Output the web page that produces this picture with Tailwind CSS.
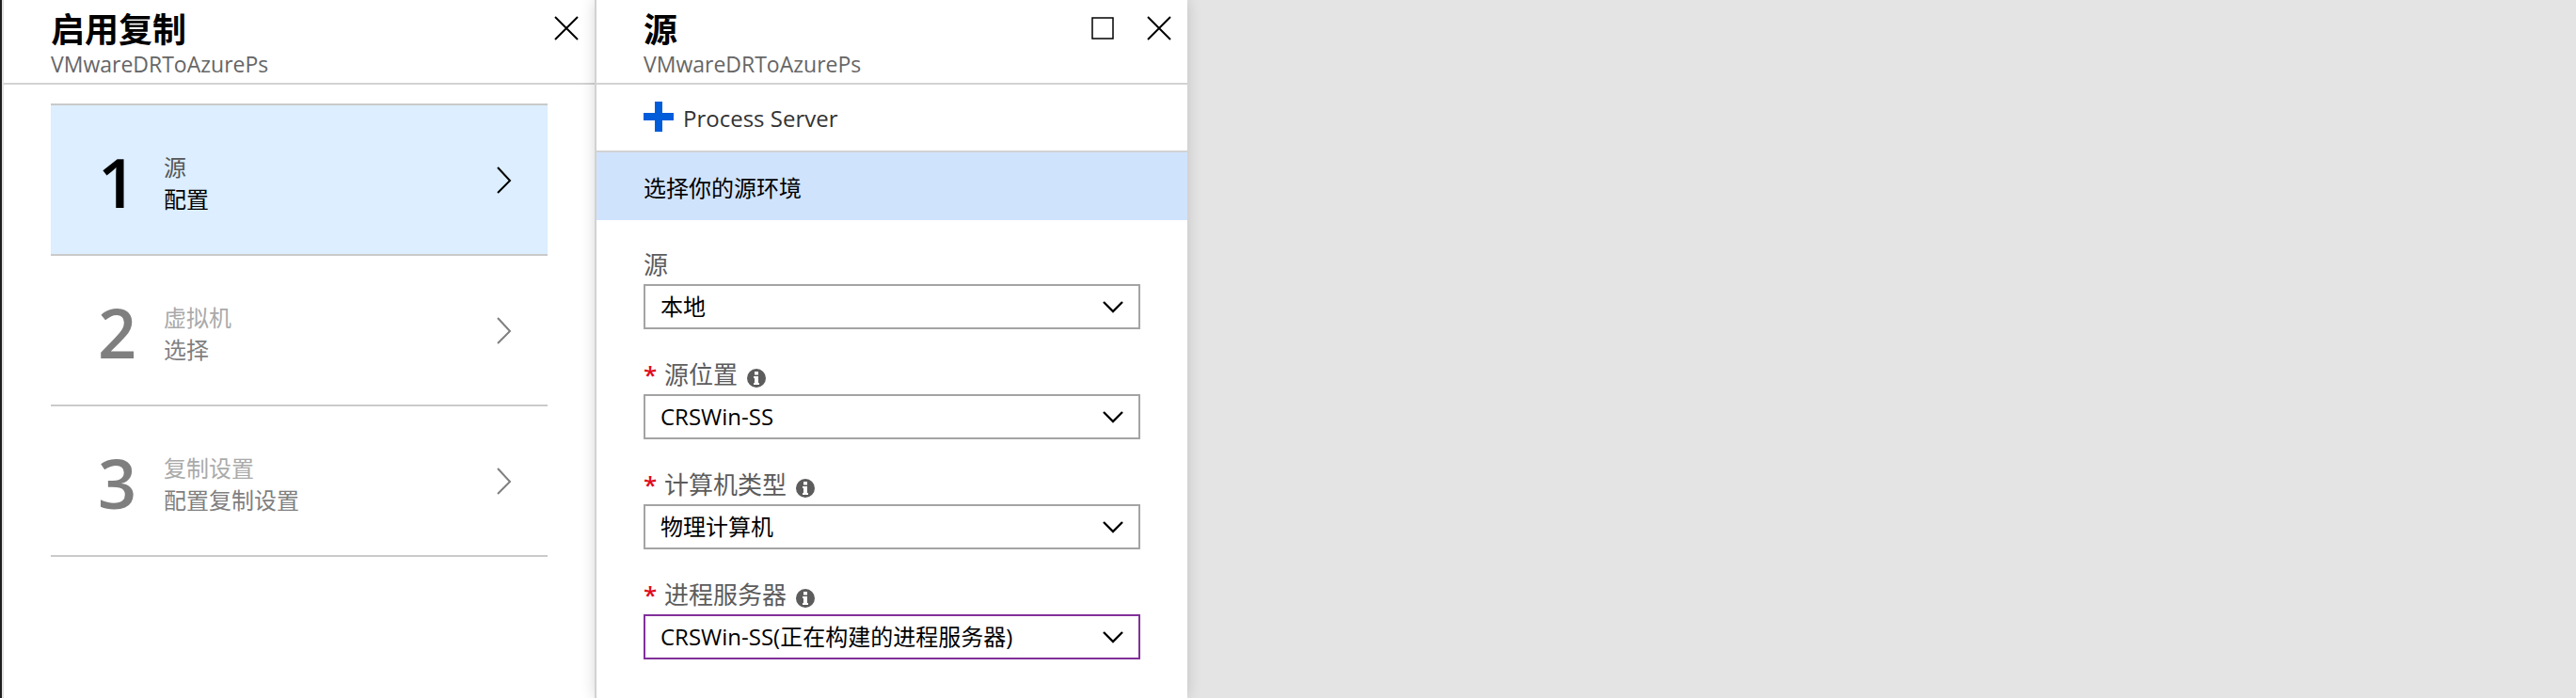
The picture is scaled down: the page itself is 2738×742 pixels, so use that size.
<!DOCTYPE html>
<html lang="zh-CN">
<head>
<meta charset="utf-8">
<title>启用复制</title>
<script src="https://cdn.jsdelivr.net/npm/@tailwindcss/browser@4"></script>
</head>
<body class="bg-[#e4e4e4] font-['Open_Sans','Noto_Sans_CJK_SC',sans-serif] text-2xl text-black">
<main class="grid min-h-screen grid-cols-[2px_630fr_630fr_1476fr]">
  <div class="bg-[#1e1e1e]"></div>

  <section class="border-l-2 border-[#e0e0e0] bg-white" aria-labelledby="enable-title">
    <header class="flex justify-between border-b-2 border-[#d2d2d2] pr-4 pl-[50px]">
      <div class="pt-[14px] pb-[2px]">
        <h1 id="enable-title" class="text-4xl leading-9 font-bold">启用复制</h1>
        <p class="text-[23px] leading-9 text-[#666]">VMwareDRToAzurePs</p>
      </div>
      <button type="button" aria-label="关闭" class="mt-4 size-7">
        <svg viewBox="0 0 28 28" class="size-7" fill="none" stroke="#000" stroke-width="2"><path d="M2 2 26 26M26 2 2 26"/></svg>
      </button>
    </header>

    <nav class="mx-[50px] mt-5 border-t-2 border-[#cacaca]">
      <button type="button" class="flex w-full items-center border-b-2 border-[#cacaca] bg-[#dceeff] py-[37px] pr-8 pl-[50px] text-left">
        <span class="w-[70px] pt-1 text-7xl leading-20 font-semibold">1</span>
        <span class="flex-1 pt-2">
          <span class="block leading-[34px] text-[#555]">源</span>
          <span class="block leading-[34px]">配置</span>
        </span>
        <svg viewBox="0 0 28 32" class="h-8 w-7" fill="none" stroke="#000" stroke-width="2"><path d="M7 3 20 17 7 30"/></svg>
      </button>
      <button type="button" class="flex w-full items-center border-b-2 border-[#cacaca] py-[37px] pr-8 pl-[50px] text-left text-[#7f7f7f]">
        <span class="w-[70px] pt-1 text-7xl leading-20 font-semibold">2</span>
        <span class="flex-1 pt-2">
          <span class="block leading-[34px] text-[#aaa]">虚拟机</span>
          <span class="block leading-[34px]">选择</span>
        </span>
        <svg viewBox="0 0 28 32" class="h-8 w-7" fill="none" stroke="currentColor" stroke-width="2"><path d="M7 3 20 17 7 30"/></svg>
      </button>
      <button type="button" class="flex w-full items-center border-b-2 border-[#cacaca] py-[37px] pr-8 pl-[50px] text-left text-[#7f7f7f]">
        <span class="w-[70px] pt-1 text-7xl leading-20 font-semibold">3</span>
        <span class="flex-1 pt-2">
          <span class="block leading-[34px] text-[#aaa]">复制设置</span>
          <span class="block leading-[34px]">配置复制设置</span>
        </span>
        <svg viewBox="0 0 28 32" class="h-8 w-7" fill="none" stroke="currentColor" stroke-width="2"><path d="M7 3 20 17 7 30"/></svg>
      </button>
    </nav>
  </section>

  <section class="border-l-2 border-[#d2d2d2] bg-white shadow-[0_0_14px_rgba(0,0,0,0.16)]" aria-labelledby="source-title">
    <header class="flex justify-between border-b-2 border-[#d2d2d2] pr-4 pl-[50px]">
      <div class="pt-[14px] pb-[2px]">
        <h2 id="source-title" class="text-4xl leading-9 font-bold">源</h2>
        <p class="text-[23px] leading-9 text-[#666]">VMwareDRToAzurePs</p>
      </div>
      <div class="mt-4 flex gap-8">
        <button type="button" aria-label="最大化" class="size-7">
          <svg viewBox="0 0 28 28" class="size-7" fill="none" stroke="#000" stroke-width="1.500"><path d="M3 3H25V25H3Z"/></svg>
        </button>
        <button type="button" aria-label="关闭" class="size-7">
          <svg viewBox="0 0 28 28" class="size-7" fill="none" stroke="#000" stroke-width="2"><path d="M2 2 26 26M26 2 2 26"/></svg>
        </button>
      </div>
    </header>

    <div class="border-b-2 border-[#d2d2d2] px-[50px]">
      <button type="button" class="flex h-[70px] items-center gap-[10px] pb-[2px] text-[#333]">
        <svg viewBox="0 0 32 32" class="size-8" fill="#015cda"><path d="M12 0h8v12h12v8H20v12h-8V20H0v-8h12z"/></svg>
        <span class="pt-1">Process Server</span>
      </button>
    </div>

    <p class="bg-[#d0e3fd] px-[50px] pt-5 pb-4 leading-9">选择你的源环境</p>

    <form class="flex flex-col gap-[30px] px-[50px] pt-[29px]">
      <div>
        <label for="source" class="mb-[3px] flex h-9 items-center text-[26px] text-[#5c5c5c]">源</label>
        <div class="grid items-center">
          <select id="source" class="col-start-1 row-start-1 h-12 w-full appearance-none border-2 border-[#a4a4a4] bg-white px-4 leading-8"><option>本地</option></select>
          <svg viewBox="0 0 24 14" class="pointer-events-none col-start-1 row-start-1 mr-4 h-[14px] w-6 justify-self-end" fill="none" stroke="#000" stroke-width="2.400"><path d="M1 2 11 12 21 2"/></svg>
        </div>
      </div>
      <div>
        <label for="location" class="mb-[3px] flex h-9 items-center text-[26px] text-[#5c5c5c]"><span class="w-[22px] font-semibold text-[#e00b1c]">*</span>源位置
          <svg viewBox="0 0 20 20" class="mt-2 ml-[10px] size-5"><circle cx="10" cy="10" r="10" fill="#5c5c5c"/><path fill="#fff" d="M8 3h4v3.500H8zM7 8h5v7h1v2H7v-2h1V10H7z"/></svg></label>
        <div class="grid items-center">
          <select id="location" class="col-start-1 row-start-1 h-12 w-full appearance-none border-2 border-[#a4a4a4] bg-white px-4 leading-8"><option>CRSWin-SS</option></select>
          <svg viewBox="0 0 24 14" class="pointer-events-none col-start-1 row-start-1 mr-4 h-[14px] w-6 justify-self-end" fill="none" stroke="#000" stroke-width="2.400"><path d="M1 2 11 12 21 2"/></svg>
        </div>
      </div>
      <div>
        <label for="machine" class="mb-[3px] flex h-9 items-center text-[26px] text-[#5c5c5c]"><span class="w-[22px] font-semibold text-[#e00b1c]">*</span>计算机类型
          <svg viewBox="0 0 20 20" class="mt-2 ml-[10px] size-5"><circle cx="10" cy="10" r="10" fill="#5c5c5c"/><path fill="#fff" d="M8 3h4v3.500H8zM7 8h5v7h1v2H7v-2h1V10H7z"/></svg></label>
        <div class="grid items-center">
          <select id="machine" class="col-start-1 row-start-1 h-12 w-full appearance-none border-2 border-[#a4a4a4] bg-white px-4 leading-8"><option>物理计算机</option></select>
          <svg viewBox="0 0 24 14" class="pointer-events-none col-start-1 row-start-1 mr-4 h-[14px] w-6 justify-self-end" fill="none" stroke="#000" stroke-width="2.400"><path d="M1 2 11 12 21 2"/></svg>
        </div>
      </div>
      <div>
        <label for="server" class="mb-[3px] flex h-9 items-center text-[26px] text-[#5c5c5c]"><span class="w-[22px] font-semibold text-[#e00b1c]">*</span>进程服务器
          <svg viewBox="0 0 20 20" class="mt-2 ml-[10px] size-5"><circle cx="10" cy="10" r="10" fill="#5c5c5c"/><path fill="#fff" d="M8 3h4v3.500H8zM7 8h5v7h1v2H7v-2h1V10H7z"/></svg></label>
        <div class="grid items-center">
          <select id="server" class="col-start-1 row-start-1 h-12 w-full appearance-none border-2 border-[#82309a] bg-white px-4 leading-8"><option>CRSWin-SS(正在构建的进程服务器)</option></select>
          <svg viewBox="0 0 24 14" class="pointer-events-none col-start-1 row-start-1 mr-4 h-[14px] w-6 justify-self-end" fill="none" stroke="#000" stroke-width="2.400"><path d="M1 2 11 12 21 2"/></svg>
        </div>
      </div>
    </form>
  </section>
</main>
</body>
</html>
